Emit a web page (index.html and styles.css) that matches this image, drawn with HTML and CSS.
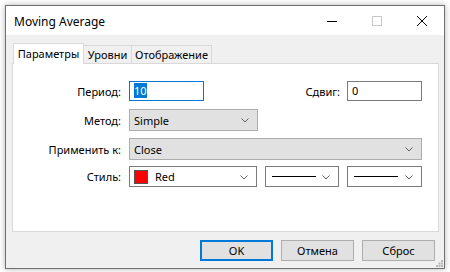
FILE: index.html
```html
<!DOCTYPE html>
<html lang="ru">
<head>
  <meta charset="UTF-8" />
  <title>Moving Average</title>
  <link rel="stylesheet" href="styles.css">
</head>
<body>
  <div class="window">

    <!-- TITLE BAR -->
    <div class="titlebar">
      <span class="title">Moving Average</span>
      <div class="controls">
        <span class="ctl">
          <svg width="10" height="10" viewBox="0 0 10 10"><path d="M0 5.5h10" stroke="#000" stroke-width="1"/></svg>
        </span>
        <span class="ctl">
          <svg width="10" height="10" viewBox="0 0 10 10"><rect x="0.5" y="0.5" width="9" height="9" fill="none" stroke="#c8c8c8"/></svg>
        </span>
        <span class="ctl">
          <svg width="10" height="10" viewBox="0 0 10 10"><path d="M0 0L10 10M10 0L0 10" stroke="#000" stroke-width="1"/></svg>
        </span>
      </div>
    </div>

    <!-- CONTENT -->
    <div class="content">
      <div class="tabs">
        <div class="tab active">Параметры</div>
        <div class="tab tab-levels">Уровни</div>
        <div class="tab tab-view">Отображение</div>
      </div>

      <div class="panel">
        <div class="row row-period">
          <label class="lbl">Период:</label>
          <div class="input focus"><span class="sel-text">10</span></div>
          <span class="spacer"></span>
          <label class="lbl-shift">Сдвиг:</label>
          <div class="input">0</div>
        </div>

        <div class="row row-method">
          <label class="lbl">Метод:</label>
          <div class="combo gray w-method">
            <span>Simple</span>
            <svg class="chev" width="8" height="5" viewBox="0 0 8 5"><path d="M0.5 0.5L4 4L7.5 0.5" fill="none" stroke="#606060"/></svg>
          </div>
        </div>

        <div class="row row-apply">
          <label class="lbl">Применить к:</label>
          <div class="combo gray w-apply">
            <span>Close</span>
            <svg class="chev" width="8" height="5" viewBox="0 0 8 5"><path d="M0.5 0.5L4 4L7.5 0.5" fill="none" stroke="#606060"/></svg>
          </div>
        </div>

        <div class="row row-style">
          <label class="lbl">Стиль:</label>
          <div class="combo white w-color">
            <span class="swatch"></span>
            <span class="color-name">Red</span>
            <svg class="chev" width="8" height="5" viewBox="0 0 8 5"><path d="M0.5 0.5L4 4L7.5 0.5" fill="none" stroke="#606060"/></svg>
          </div>
          <div class="combo white w-line">
            <span class="line"></span>
            <svg class="chev" width="8" height="5" viewBox="0 0 8 5"><path d="M0.5 0.5L4 4L7.5 0.5" fill="none" stroke="#606060"/></svg>
          </div>
          <div class="combo white w-line">
            <span class="line"></span>
            <svg class="chev" width="8" height="5" viewBox="0 0 8 5"><path d="M0.5 0.5L4 4L7.5 0.5" fill="none" stroke="#606060"/></svg>
          </div>
        </div>
      </div>

      <!-- BUTTONS -->
      <div class="buttons">
        <button class="btn default">OK</button>
        <button class="btn">Отмена</button>
        <button class="btn">Сброс</button>
      </div>
      <div class="grip">
        <svg width="7" height="7" viewBox="0 0 7 7" fill="#b8b8b8">
          <rect x="5" y="0" width="2" height="2"/>
          <rect x="2.5" y="2.5" width="2" height="2"/><rect x="5" y="2.5" width="2" height="2"/>
          <rect x="0" y="5" width="2" height="2"/><rect x="2.5" y="5" width="2" height="2"/><rect x="5" y="5" width="2" height="2"/>
        </svg>
      </div>
    </div>
  </div>
</body>
</html>
```

FILE: styles.css
```css
body {
  margin: 0;
  background: #fff;
  font-family: "Noto Sans", "Open Sans", sans-serif;
  font-size: 11px;
  color: #000;
}

/* WINDOW */
.window {
  margin: 5px;
  width: 438px;
  height: 262px;
  border: 1px solid #6f6f6f;
  box-shadow: 0 0 6px rgba(0, 0, 0, 0.3);
  display: flex;
  flex-direction: column;
}

.titlebar {
  height: 29px;
  background: #fff;
  display: flex;
  align-items: center;
  justify-content: space-between;
  padding-left: 8px;
}

.title {
  font-size: 12px;
  margin-top: 1px;
}

.controls {
  display: flex;
  height: 100%;
}

.ctl {
  width: 45px;
  display: flex;
  align-items: center;
  justify-content: center;
}

/* CONTENT */
.content {
  flex: 1;
  background: #f0f0f0;
  padding: 8px 5px 0 6px;
  position: relative;
}

.tabs {
  display: flex;
  align-items: flex-end;
  height: 20px;
  padding-left: 1px;
}

.tab {
  box-sizing: border-box;
  height: 18px;
  border: 1px solid #d9d9d9;
  border-bottom: none;
  text-align: center;
  line-height: 17px;
  white-space: nowrap;
}

.tab.active {
  height: 21px;
  width: 71px;
  background: #fff;
  margin-bottom: -1px;
  position: relative;
  z-index: 1;
  line-height: 19px;
}

.tab-levels {
  width: 48px;
  border-left: none;
}

.tab-view {
  width: 80px;
  border-left: none;
}

.panel {
  background: #fff;
  border: 1px solid #d9d9d9;
  padding: 17px 16px 0 0;
  box-sizing: border-box;
  height: 169px;
}

.row {
  display: flex;
  align-items: center;
}

.row-method { margin-top: 8px; }
.row-apply { margin-top: 7px; }
.row-style { margin-top: 6px; gap: 8px; }

.lbl {
  width: 108px;
  text-align: right;
  margin-right: 8px;
  flex-shrink: 0;
}

.row-style .lbl {
  margin-right: 0;
}

.lbl-shift {
  margin-right: 7px;
}

.spacer {
  flex: 1;
}

.input {
  box-sizing: border-box;
  width: 75px;
  height: 20px;
  border: 1px solid #7a7a7a;
  padding-left: 4px;
  line-height: 17px;
}

.input.focus {
  border-color: #0078d7;
}

.sel-text {
  background: #0078d7;
  color: #fff;
}

.combo {
  box-sizing: border-box;
  display: flex;
  align-items: center;
  padding-left: 4px;
  position: relative;
}

.combo.gray {
  height: 22px;
  background: #e1e1e1;
  border: 1px solid #adadad;
}

.combo.white {
  height: 21px;
  background: #fff;
  border: 1px solid #7a7a7a;
}

.chev {
  position: absolute;
  right: 8px;
  top: 50%;
  margin-top: -2px;
}

.w-method { width: 129px; }
.w-apply { width: 293px; }
.w-color { width: 128px; }
.w-line { width: 75px; }

.swatch {
  width: 12px;
  height: 12px;
  background: #ff0000;
  border: 1px solid #555;
  margin-right: 7px;
}

.line {
  width: 44px;
  height: 1px;
  background: #000;
  margin-left: 2px;
}

/* BUTTONS */
.buttons {
  display: flex;
  justify-content: flex-end;
  gap: 8px;
  margin-top: 8px;
  padding-right: 4px;
}

.btn {
  box-sizing: border-box;
  width: 73px;
  height: 21px;
  background: #e1e1e1;
  border: 1px solid #adadad;
  font-family: inherit;
  font-size: 11px;
  color: #000;
  padding: 0;
}

.btn.default {
  border: 2px solid #0078d7;
}

.grip {
  position: absolute;
  right: 1px;
  bottom: 1px;
  line-height: 0;
}
```
